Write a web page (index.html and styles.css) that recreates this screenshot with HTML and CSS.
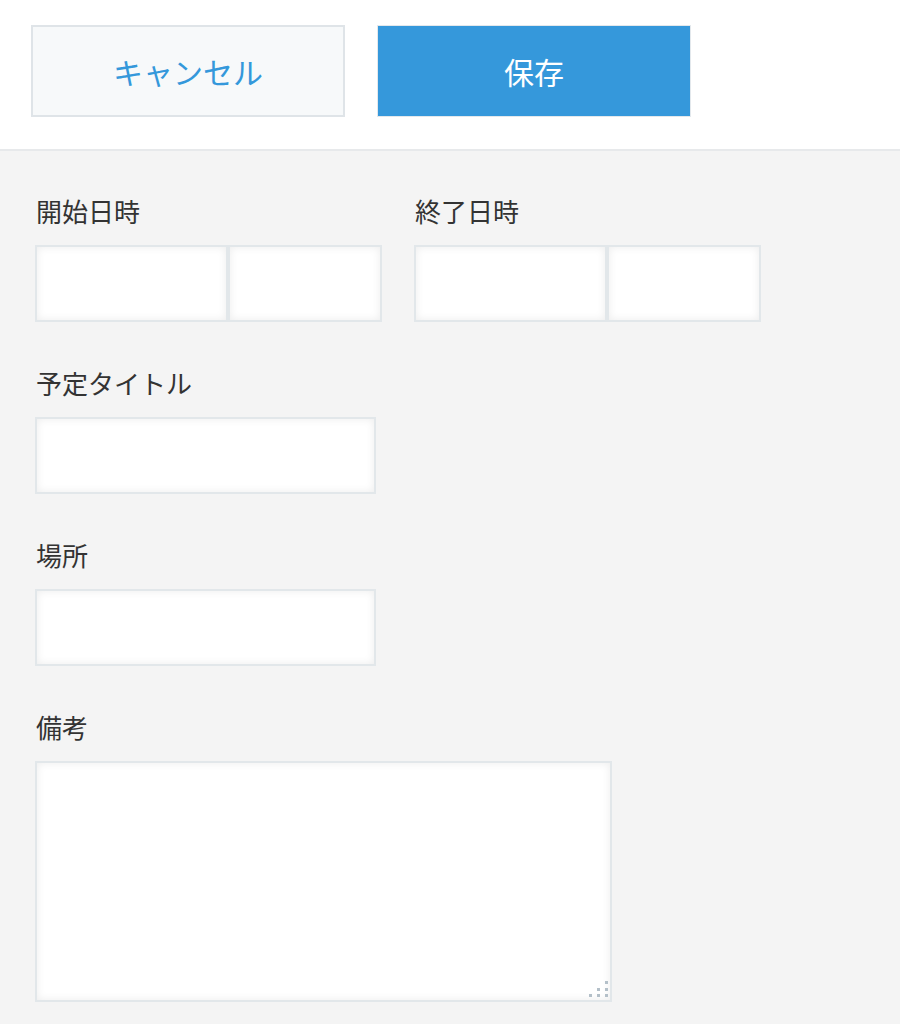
FILE: index.html
```html
<!DOCTYPE html>
<html lang="ja">
<head>
<meta charset="utf-8">
<title>予定</title>
<link rel="stylesheet" href="styles.css">
</head>
<body>
<header class="toolbar">
  <button class="btn btn-cancel" type="button">キャンセル</button>
  <button class="btn btn-save" type="button">保存</button>
</header>
<main class="form">
  <div class="row">
    <div class="field">
      <label class="label">開始日時</label>
      <div class="datetime">
        <input class="input date" type="text">
        <input class="input time" type="text">
      </div>
    </div>
    <div class="field">
      <label class="label">終了日時</label>
      <div class="datetime">
        <input class="input date" type="text">
        <input class="input time" type="text">
      </div>
    </div>
  </div>
  <div class="field">
    <label class="label">予定タイトル</label>
    <input class="input text" type="text">
  </div>
  <div class="field">
    <label class="label">場所</label>
    <input class="input text" type="text">
  </div>
  <div class="field">
    <label class="label">備考</label>
    <div class="memo-wrap">
      <textarea class="input memo"></textarea>
      <svg class="grip" width="20" height="20" viewBox="0 0 20 20">
        <rect x="16" y="3" width="3" height="3"/>
        <rect x="8" y="10" width="3" height="3"/>
        <rect x="16" y="10" width="3" height="3"/>
        <rect x="0" y="16" width="3" height="3"/>
        <rect x="8" y="16" width="3" height="3"/>
        <rect x="16" y="16" width="3" height="3"/>
      </svg>
    </div>
  </div>
</main>
</body>
</html>
```
FILE: styles.css
```css
* { box-sizing: border-box; }
html, body {
  margin: 0;
  padding: 0;
  background: #f4f4f4;
  font-family: "Noto Sans CJK JP", "Noto Sans", sans-serif;
}
.toolbar {
  background: #ffffff;
  height: 151px;
  border-bottom: 2px solid #e7e9eb;
  padding: 25px 0 0 31px;
  display: flex;
  gap: 32px;
  align-items: flex-start;
}
.btn {
  width: 314px;
  height: 92px;
  font-family: inherit;
  font-size: 30px;
  padding: 0;
  margin: 0;
  cursor: pointer;
}
.btn-cancel {
  background: #f7f9fa;
  color: #3498db;
  border: 2px solid #dfe4e8;
}
.btn-save {
  background: #3598db;
  color: #ffffff;
  border: 1px solid #e3e8ec;
}
.form {
  padding: 42px 0 0 35px;
  display: flex;
  flex-direction: column;
  gap: 43px;
}
.row {
  display: flex;
  gap: 32px;
}
.field {
  display: flex;
  flex-direction: column;
  gap: 17px;
}
.label {
  font-size: 26px;
  line-height: 35px;
  color: #333333;
  padding-left: 1px;
}
.datetime {
  display: flex;
}
.input {
  display: block;
  margin: 0;
  height: 77px;
  background: #ffffff;
  border: 2px solid #e2e7ea;
  box-shadow: inset 0 0 8px rgba(0, 0, 0, 0.08);
  font-family: inherit;
  font-size: 24px;
  padding: 0 12px;
  outline: none;
  border-radius: 0;
}
.date { width: 193px; }
.time { width: 154px; }
.text { width: 341px; }
.memo-wrap {
  position: relative;
  width: 577px;
}
.memo {
  width: 577px;
  height: 241px;
  resize: none;
  padding: 12px;
}
.grip {
  position: absolute;
  right: 3px;
  bottom: 4px;
  fill: #b4c0c9;
}
```
